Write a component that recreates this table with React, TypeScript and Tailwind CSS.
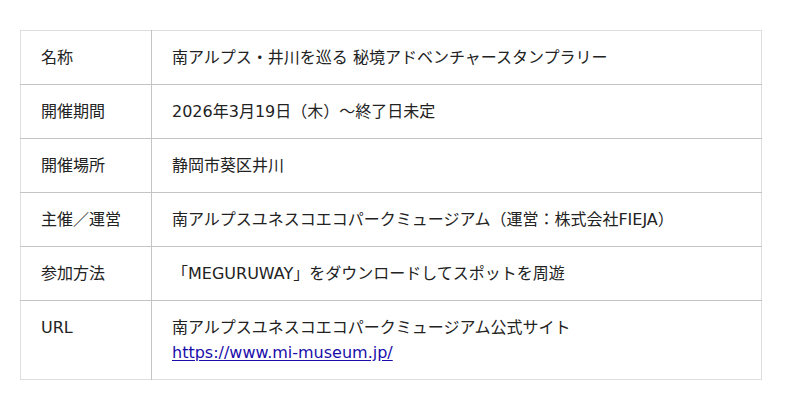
const rows: { label: string; value: React.ReactNode }[] = [
  { label: "名称", value: "南アルプス・井川を巡る 秘境アドベンチャースタンプラリー" },
  { label: "開催期間", value: "2026年3月19日（木）～終了日未定" },
  { label: "開催場所", value: "静岡市葵区井川" },
  { label: "主催／運営", value: "南アルプスユネスコエコパークミュージアム（運営：株式会社FIEJA）" },
  { label: "参加方法", value: "「MEGURUWAY」をダウンロードしてスポットを周遊" },
  {
    label: "URL",
    value: (
      <>
        南アルプスユネスコエコパークミュージアム公式サイト
        <br />
        <a href="#" className="text-[#1a0dab] underline underline-offset-2">
          https://www.mi-museum.jp/
        </a>
      </>
    ),
  },
];

export default function App() {
  return (
    <div
      className="h-[410px] w-[800px] bg-white pl-5 pt-[30px] text-[16px] leading-[25px] text-[#222]"
      style={{ fontFamily: '"DejaVu Sans", "Noto Sans CJK JP", sans-serif' }}
    >
      <table className="w-[742px] border-collapse border border-[#dedede]">
        <tbody>
          {rows.map((row, i) => (
            <tr key={i} className={i > 0 ? "border-t border-[#c4c4c4]" : ""}>
              <td className="w-[131px] border-r border-[#c4c4c4] px-5 pb-[14px] pt-[14px] align-top">
                {row.label}
              </td>
              <td className="px-5 pb-[14px] pt-[14px] align-top">{row.value}</td>
            </tr>
          ))}
        </tbody>
      </table>
    </div>
  );
}
